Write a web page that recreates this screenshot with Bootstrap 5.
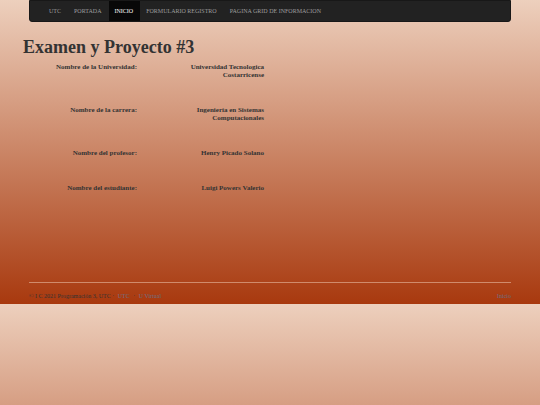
<!DOCTYPE html>
<html lang="es">
<head>
<meta charset="utf-8">
<meta name="viewport" content="width=device-width, initial-scale=1">
<title>Examen y Proyecto #3</title>
<link href="https://cdn.jsdelivr.net/npm/bootstrap@5.3.0/dist/css/bootstrap.min.css" rel="stylesheet">
<style>
body {
  font-family: Georgia, "Liberation Serif", serif;
  font-size: 6px;
  line-height: 8px;
  color: #333;
  background: linear-gradient(#edd0bd, #a8390e);
}
.page-shell { padding: 0 29px; }
.site-nav {
  background: #222;
  border: 1px solid #181818;
  border-radius: 0 0 3px 3px;
  padding: 0 13px;
}
.site-nav .nav-link { color: #9d9d9d; padding: 6px 7px 6px 6px; line-height: 8px; }
.site-nav .nav-link:hover { color: #fff; }
.site-nav .nav-link.active { color: #fff; background: #080808; }
.exam { padding: 15px 16px 0; }
.exam h1 { font-size: 18px; line-height: 20px; margin: 0 7px 6px; }
.exam dl { --bs-gutter-x: 12px; margin: 0; }
.exam dt, .exam dd { padding: 0 6px; margin: 0 0 27px; font-size: 7px; font-weight: 700; text-align: right; }
.exam dd { padding-left: 30px; }
.site-footer { border-top: 1px solid #d08b6c; margin-top: 63px; padding: 9px 0 4px; }
.site-footer a { color: #6c7084; }
.site-footer span a { margin: 0 2px; }
</style>
<script defer src="https://cdn.jsdelivr.net/npm/bootstrap@5.3.0/dist/js/bootstrap.bundle.min.js"></script>
</head>
<body>
<header class="page-shell">
  <nav class="site-nav" aria-label="Principal">
    <ul class="nav text-uppercase">
      <li class="nav-item"><a class="nav-link" href="#">UTC</a></li>
      <li class="nav-item"><a class="nav-link" href="#">Portada</a></li>
      <li class="nav-item"><a class="nav-link active" aria-current="page" href="#">Inicio</a></li>
      <li class="nav-item"><a class="nav-link" href="#">Formulario Registro</a></li>
      <li class="nav-item"><a class="nav-link" href="#">Pagina Grid de Informacion</a></li>
    </ul>
  </nav>
</header>
<main class="exam">
  <h1 class="fw-bold">Examen y Proyecto #3</h1>
  <dl class="row">
    <dt class="col-3">Nombre de la Universidad:</dt>
    <dd class="col-3">Universidad Tecnologica Costarricense</dd>
    <div class="w-100"></div>
    <dt class="col-3">Nombre de la carrera:</dt>
    <dd class="col-3">Ingeniería en Sistemas Computacionales</dd>
    <div class="w-100"></div>
    <dt class="col-3">Nombre del profesor:</dt>
    <dd class="col-3">Henry Picado Solano</dd>
    <div class="w-100"></div>
    <dt class="col-3">Nombre del estudiante:</dt>
    <dd class="col-3">Luigi Powers Valerio</dd>
  </dl>
</main>
<div class="page-shell">
  <footer class="site-footer d-flex justify-content-between">
    <span>© I C 2021 Programación 3, UTC · <a class="text-decoration-none" href="#">UTC</a> · <a class="text-decoration-none" href="#">U Virtual</a></span>
    <a class="text-decoration-none" href="#">Inicio</a>
  </footer>
</div>
</body>
</html>
